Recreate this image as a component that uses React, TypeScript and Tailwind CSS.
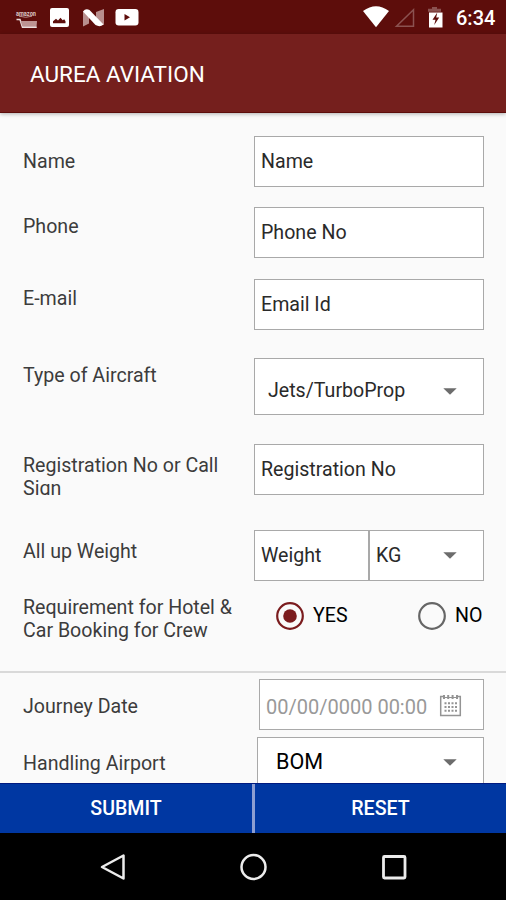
import type { ReactNode } from "react"

interface LabelProps {
    className: string
    children: ReactNode
}

function Label({ className, children }: LabelProps) {
    return <div className={`w-[254px] shrink-0 pl-[23px] leading-[23px] text-[#3c3c3c] ${className}`}>{children}</div>
}

interface FieldProps {
    className?: string
    children: ReactNode
}

function Field({ className = "h-[51px] pl-[6px]", children }: FieldProps) {
    return (
        <div className={`mr-[22px] flex grow items-center border border-[#a9a9a9] bg-white text-[#2a2a2a] ${className}`}>
            {children}
        </div>
    )
}

function Caret() {
    return (
        <svg className="mr-[26px] ml-auto h-[7px] w-[14px]" viewBox="0 0 14 7">
            <path d="M0.3 0.3h13.4L7 6.8z" fill="#6c6c6c" />
        </svg>
    )
}

function Radio({ checked }: { checked: boolean }) {
    return (
        <svg className="size-7" viewBox="0 0 28 28">
            <circle cx="14" cy="14" r="12.8" fill="none" stroke={checked ? "#7b1c1e" : "#666666"} strokeWidth="2.2" />
            {checked && <circle cx="14" cy="14" r="6.8" fill="#7b1c1e" />}
        </svg>
    )
}

function CalendarIcon() {
    return (
        <svg className="mr-[21px] mb-1 ml-auto h-[23px] w-[23px]" viewBox="0 0 23 23" fill="none" stroke="#949494">
            <path d="M5 2.5H1.7v19h19.6v-19H18" strokeWidth="1.5" />
            <path d="M4.5 3.5h14.5" strokeWidth="1" />
            <path d="M5 1v4M9.2 1v4M13.6 1v4M18 1v4" strokeWidth="2" />
            <path d="M5.5 9.2h13M5.5 13h13M5.5 16.8h13" strokeWidth="2" strokeDasharray="2 1.5" />
        </svg>
    )
}

function StatusBar() {
    return (
        <div className="flex h-[34px] shrink-0 items-center bg-[#5d0d0b] text-white">
            <svg className="h-[34px] w-[150px]" viewBox="0 0 150 34">
                <text x="16" y="15.5" fontSize="7" fontWeight="700" fill="#dcc7c6" textLength="20" lengthAdjust="spacingAndGlyphs">
                    amazon
                </text>
                <path d="M19 16.2q7 2.2 13 0" fill="none" stroke="#b98b89" strokeWidth="1" />
                <path d="M16.500 19.500h3.500l2.500 7.700h14" fill="none" stroke="#eadddd" strokeWidth="1.5" />
                <path d="M20.5 21H37l-.4 5.5H22.5z" fill="#bd9493" />
                <path d="M22.5 26.500h14v1.5h-14z" fill="#eadddd" />
                <rect x="50" y="8" width="19" height="19" rx="2" fill="#fff" />
                <path d="M53 23.300v-2l3-2.500 2 1.800 2.500-2.800 2.200 2.500 1.500-1 1.300 2v2z" fill="#5d0d0b" />
                <path d="M83 11l6 5V23.500l-6 3z" fill="#b88f8e" />
                <path d="M104 9v16l-8-4v-9z" fill="#b88f8e" />
                <path d="M83 11.500q2.500-3.500 6.500-1.500l14 14.500q-3.500 3-8 .5z" fill="#fff" />
                <rect x="115.5" y="9" width="23" height="16.5" rx="3.2" fill="#fff" />
                <path d="M124.5 14v6.500l5.500-3.200z" fill="#5d0d0b" />
            </svg>
            <svg className="ml-auto h-[34px] w-[86px]" viewBox="0 0 86 34">
                <path d="M1 11q13-9.500 26 0L14 27.200z" fill="#fff" />
                <path d="M51.500 9.800v16.400H34.500z" fill="none" stroke="#8b5250" strokeWidth="1.5" />
                <path d="M70 7h5v1.800h4v3H66v-3h4z" fill="#8b5250" />
                <path d="M67 12.500h13.500V27.500H67z" fill="#fff" />
                <path d="M75.300 12.500l-4.800 7.300h3l-1.300 5.200 5-7.500h-3z" fill="#5d0d0b" />
            </svg>
            <span className="mr-[10px] ml-[8px] w-[40px] pt-[2px] text-[20px] leading-none font-medium">6:34</span>
        </div>
    )
}

export default function App() {
    return (
        <div className="flex h-[900px] w-[506px] flex-col overflow-hidden bg-[#fafafa] font-[Roboto,sans-serif] text-[19.6px]">
            <StatusBar />
            <header className="z-10 flex h-[79px] shrink-0 items-center border-b border-[#5d0d0b] bg-[#751f1d] pt-[3px] pl-[30px] text-[22.5px] text-white shadow-[0_1px_4px_rgba(0,0,0,0.3)]">
                AUREA AVIATION
            </header>

            <main className="flex h-[670px] shrink-0 flex-col overflow-hidden pt-[23px]">
                <div className="flex h-[71px] shrink-0 items-start">
                    <Label className="pt-[14px]">Name</Label>
                    <Field>Name</Field>
                </div>
                <div className="flex h-[72px] shrink-0 items-start">
                    <Label className="pt-2">Phone</Label>
                    <Field>Phone No</Field>
                </div>
                <div className="flex h-[79px] shrink-0 items-start">
                    <Label className="pt-2">E-mail</Label>
                    <Field>Email Id</Field>
                </div>
                <div className="flex h-[86px] shrink-0 items-start">
                    <Label className="pt-[6px]">Type of Aircraft</Label>
                    <Field className="h-[57px] pt-[9px] pl-[13px]">
                        Jets/TurboProp
                        <Caret />
                    </Field>
                </div>
                <div className="flex h-[86px] shrink-0 items-start">
                    <Label className="h-[51px] overflow-hidden pt-[10px]">
                        Registration No or Call
                        <br />
                        Sign
                    </Label>
                    <Field>Registration No</Field>
                </div>
                <div className="flex h-[66px] shrink-0 items-start">
                    <Label className="pt-[10px]">All up Weight</Label>
                    <Field>
                        <span className="w-[107px]">Weight</span>
                        <span className="flex h-full grow items-center border-l-2 border-[#a9a9a9] pl-[6px]">
                            KG
                            <Caret />
                        </span>
                    </Field>
                </div>
                <div className="flex h-[75px] shrink-0 items-start">
                    <Label className="">
                        Requirement for Hotel &amp;
                        <br />
                        Car Booking for Crew
                    </Label>
                    <div className="flex grow items-center pt-[5px] pl-[22px] text-black">
                        <Radio checked={true} />
                        <span className="w-[114px] pl-[9px]">YES</span>
                        <Radio checked={false} />
                        <span className="pl-[9px]">NO</span>
                    </div>
                </div>
                <div className="h-[2px] shrink-0 bg-[#d9d9d9]" />
                <div className="flex h-[58px] shrink-0 items-start pt-[6px]">
                    <Label className="pt-[16px]">Journey Date</Label>
                    <Field className="ml-[5px] h-[51px] pt-[5px] pl-[6px]">
                        <span className="text-[20px] text-[#999999]">00/00/0000 00:00</span>
                        <CalendarIcon />
                    </Field>
                </div>
                <div className="flex shrink-0 items-start pt-[6px]">
                    <Label className="pt-[15px]">Handling Airport</Label>
                    <Field className="ml-[3px] h-[51px] pl-[18px]">
                        <span className="text-[21.600px] text-black">BOM</span>
                        <Caret />
                    </Field>
                </div>
            </main>

            <div className="flex h-[50px] shrink-0 border-t border-[#001a80] bg-[#0037a2] font-medium text-white">
                <button className="w-[252px]">SUBMIT</button>
                <div className="w-[3px] bg-[#8d9ed2]" />
                <button className="grow">RESET</button>
            </div>

            <nav className="flex h-[67px] shrink-0 items-center justify-center gap-[112px] bg-black">
                <svg className="size-[28px]" viewBox="0 0 28 28" fill="none" stroke="#ececec" strokeWidth="2.5">
                    <path d="M24.500 2.500v23L3 14z" strokeLinejoin="round" />
                </svg>
                <svg className="size-[28px]" viewBox="0 0 28 28" fill="none" stroke="#ececec" strokeWidth="2.5">
                    <circle cx="14.500" cy="14" r="12" />
                </svg>
                <svg className="size-[28px]" viewBox="0 0 28 28" fill="none" stroke="#ececec" strokeWidth="2.8">
                    <rect x="4.500" y="3.500" width="21.500" height="21.500" rx="1" />
                </svg>
            </nav>
        </div>
    )
}
